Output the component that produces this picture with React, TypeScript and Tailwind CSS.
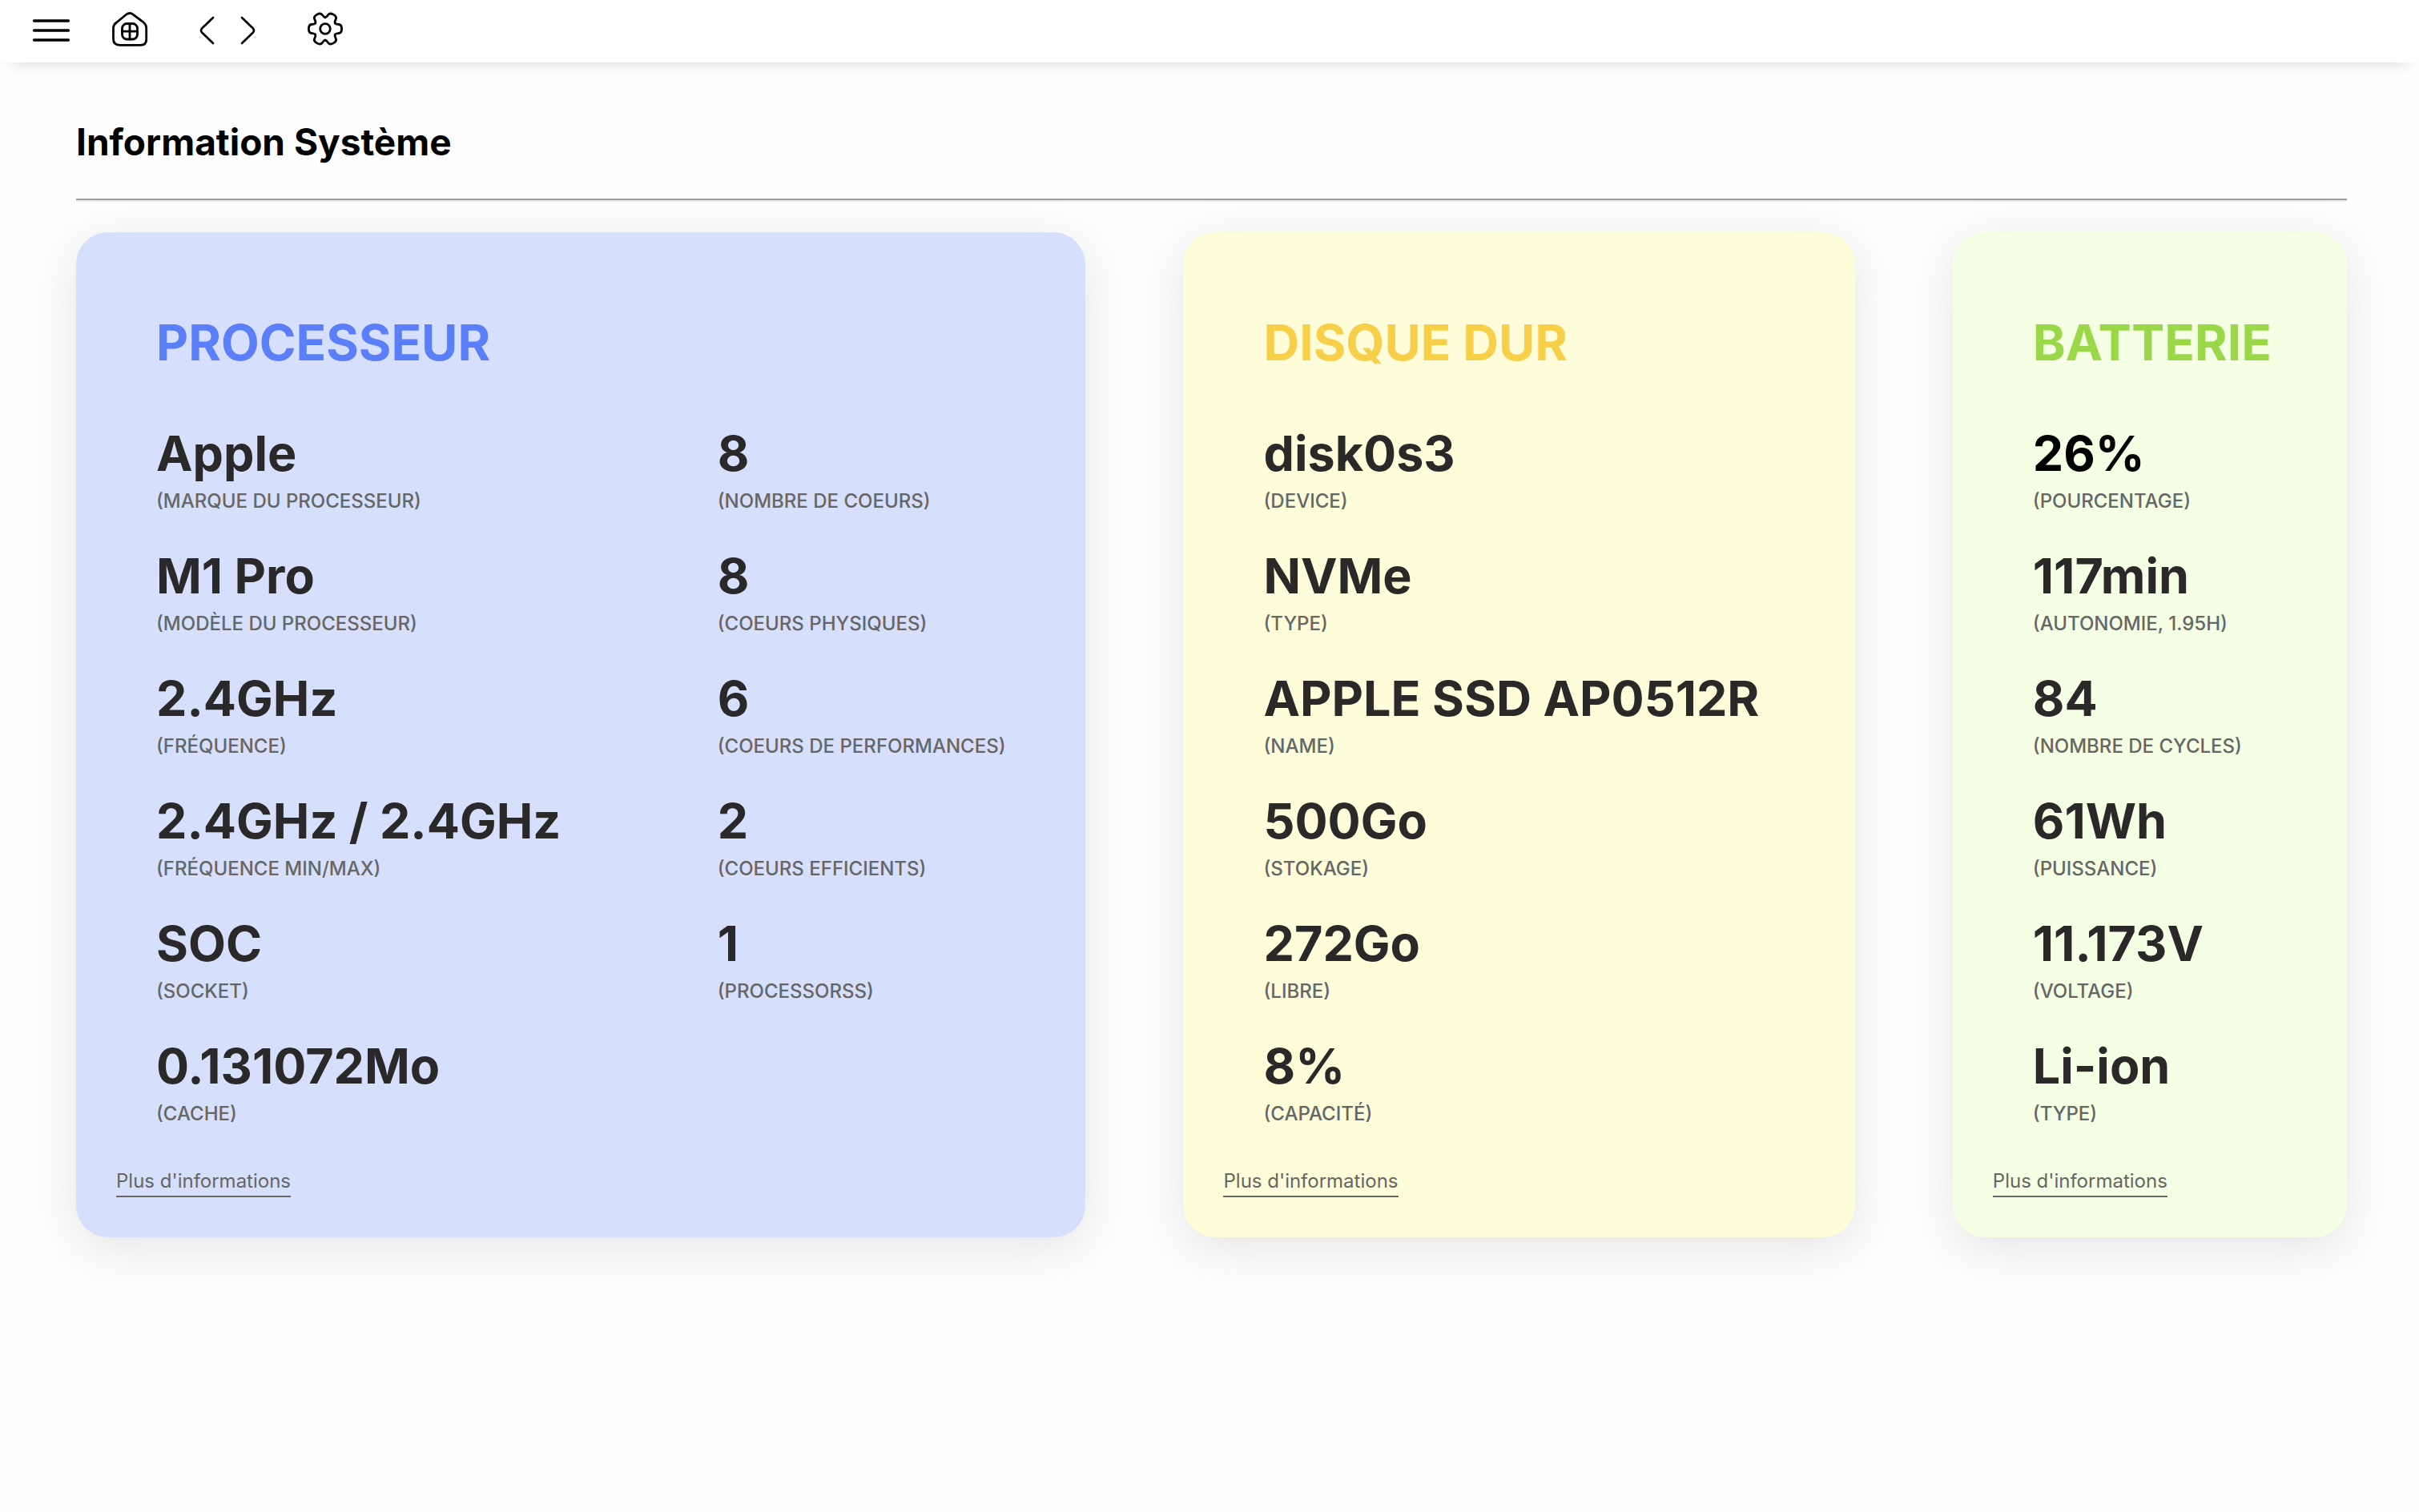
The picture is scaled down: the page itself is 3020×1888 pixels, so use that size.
type Item = { value: string; label: string; strong?: boolean };

const cpuLeft: Item[] = [
  { value: "Apple", label: "(MARQUE DU PROCESSEUR)" },
  { value: "M1 Pro", label: "(MODÈLE DU PROCESSEUR)" },
  { value: "2.4GHz", label: "(FRÉQUENCE)" },
  { value: "2.4GHz / 2.4GHz", label: "(FRÉQUENCE MIN/MAX)" },
  { value: "SOC", label: "(SOCKET)" },
  { value: "0.131072Mo", label: "(CACHE)" },
];
const cpuRight: Item[] = [
  { value: "8", label: "(NOMBRE DE COEURS)" },
  { value: "8", label: "(COEURS PHYSIQUES)" },
  { value: "6", label: "(COEURS DE PERFORMANCES)" },
  { value: "2", label: "(COEURS EFFICIENTS)" },
  { value: "1", label: "(PROCESSORSS)" },
];
const disk: Item[] = [
  { value: "disk0s3", label: "(DEVICE)" },
  { value: "NVMe", label: "(TYPE)" },
  { value: "APPLE SSD AP0512R", label: "(NAME)" },
  { value: "500Go", label: "(STOKAGE)" },
  { value: "272Go", label: "(LIBRE)" },
  { value: "8%", label: "(CAPACITÉ)" },
];
const battery: Item[] = [
  { value: "26%", label: "(POURCENTAGE)", strong: true },
  { value: "117min", label: "(AUTONOMIE, 1.95H)" },
  { value: "84", label: "(NOMBRE DE CYCLES)" },
  { value: "61Wh", label: "(PUISSANCE)" },
  { value: "11.173V", label: "(VOLTAGE)" },
  { value: "Li-ion", label: "(TYPE)" },
];

function Items({ items }: { items: Item[] }) {
  return (
    <dl className="flex flex-col gap-[33px]">
      {items.map((item) => (
        <div key={item.label} className="flex flex-col-reverse whitespace-nowrap">
          <dt className="text-[24px] leading-[40px] font-medium text-[#666666]">{item.label}</dt>
          <dd
            className={
              item.strong
                ? "text-[61px] leading-[80px] font-bold text-black"
                : "text-[61px] leading-[80px] font-bold text-[#2a2828]"
            }
          >
            {item.value}
          </dd>
        </div>
      ))}
    </dl>
  );
}

function Card({ title, tone, titleTone, columns }: { title: string; tone: string; titleTone: string; columns: Item[][] }) {
  return (
    <section
      className={`flex flex-col rounded-[40px] pt-[98px] pb-[50px] shadow-[0_14px_58px_rgba(100,100,111,0.17)] ${tone}`}
    >
      <h2 className={`pl-[100px] text-[62px] leading-[80px] font-bold ${titleTone}`}>{title}</h2>
      <div className={columns.length > 1 ? "mt-[58px] grid grid-cols-[702fr_358fr] px-[100px]" : "mt-[58px] pl-[100px]"}>
        {columns.map((items, i) => (
          <Items key={i} items={items} />
        ))}
      </div>
      <a href="#" className="mt-[46px] ml-[50px] self-start border-b-2 border-[#666666] text-[24px] leading-[36px] text-[#666666]">
        Plus d'informations
      </a>
    </section>
  );
}

const line = { fill: "none", stroke: "#000", strokeLinecap: "round", strokeLinejoin: "round" } as const;

export default function App() {
  return (
    <div className="min-h-screen bg-[#fefefe] font-['Inter',sans-serif]">
      <nav className="flex h-[78px] items-center bg-white pl-[36px] shadow-[0_16px_20px_-16px_rgba(33,35,38,0.2)]">
        <button aria-label="Menu" className="mr-[44px]">
          <svg className="size-[56px]" viewBox="0 0 56 56" {...line} strokeWidth="3.4">
            <path d="M6.500 15H49.500M6.500 27H49.500M6.500 39H49.500" />
          </svg>
        </button>
        <button aria-label="Accueil" className="mr-[46px]">
          <svg className="size-[52px]" viewBox="0 0 52 52" {...line} strokeWidth="2.8">
            <path d="M5.500 22.500Q5.500 18 9 15.500L20.500 6Q25.600 1.400 30.500 5.400L43.500 15.200Q46.700 18 46.700 22V36.500Q46.700 43.300 39.500 43.300H13.500Q5.500 43.300 5.500 35.500Z" />
            <rect x="16.500" y="16.500" width="19" height="19.500" rx="6" />
            <path d="M26 16.500V36M16.500 26.200H35.500" />
          </svg>
        </button>
        <button aria-label="Précédent" className="mr-5">
          <svg className="h-[50px] w-[40px]" viewBox="0 0 40 50" {...line} strokeWidth="2.6">
            <path d="M32 8L18 21.500Q16 24 18 26.500L32 40" />
          </svg>
        </button>
        <button aria-label="Suivant" className="mr-[47px]">
          <svg className="h-[50px] w-[40px]" viewBox="0 0 40 50" {...line} strokeWidth="2.6">
            <path d="M8 8L22 21.500Q24 24 22 26.500L8 40" />
          </svg>
        </button>
        <button aria-label="Paramètres">
          <svg className="size-[50px]" viewBox="-25 -25 50 50" {...line} strokeWidth="2.8">
            <g transform="translate(0 -3)">
              <circle r="6.300" />
              {[0, 60, 120, 180, 240, 300].map((a) => (
                <path
                  key={a}
                  transform={`rotate(${a})`}
                  d="M12.300 -7.100C13.500 -5.500 15 -5.700 17 -5.500C20 -5.200 20.600 -3.400 20.600 0C20.600 3.400 20 5.200 17 5.500C15 5.700 13.500 5.500 12.300 7.100"
                />
              ))}
            </g>
          </svg>
        </button>
      </nav>
      <main className="pt-[67px] pr-[90px] pb-20 pl-[95px]">
        <h1 className="text-[46px] leading-[64px] font-bold text-black">Information Système</h1>
        <hr className="mt-[39px] border-t-2 border-b-2 border-t-[#9a9a9a] border-b-[#eeeeee]" />
        <div className="mt-[38px] grid grid-cols-[1260fr_838fr_492fr] gap-[122px]">
          <Card title="PROCESSEUR" tone="bg-[#d6dffc]" titleTone="text-[#5b7ff8]" columns={[cpuLeft, cpuRight]} />
          <Card title="DISQUE DUR" tone="bg-[#fefcd9]" titleTone="text-[#f8cf49]" columns={[disk]} />
          <Card title="BATTERIE" tone="bg-[#f4ffe4]" titleTone="text-[#9ad84a]" columns={[battery]} />
        </div>
      </main>
    </div>
  );
}
